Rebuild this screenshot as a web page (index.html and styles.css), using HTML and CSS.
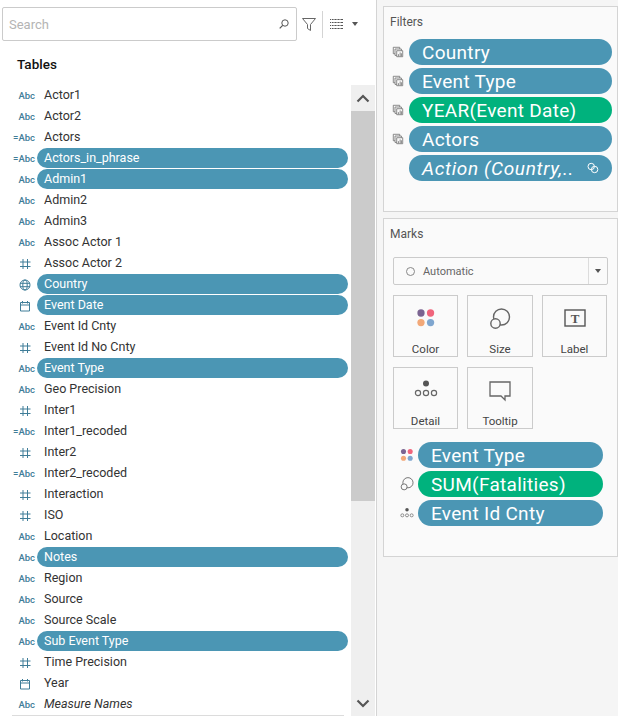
FILE: index.html
```html
<!DOCTYPE html>
<html lang="en">
<head>
    <meta charset="UTF-8">
    <meta name="viewport" content="width=device-width, initial-scale=1.0">
    <title>Data pane</title>
    <link rel="stylesheet" href="styles.css">
</head>
<body>
    <svg class="defs" width="0" height="0">
        <symbol id="i-num" viewBox="0 0 14 14"><path d="M5 2 L5 12 M9.5 2 L9.5 12 M2 5 L12.5 5 M2 9.5 L12.5 9.5" fill="none" stroke="#3f7d98" stroke-width="1"/></symbol>
        <symbol id="i-cal" viewBox="0 0 14 14"><path d="M2.5 3.5 H11.5 V12 H2.5 Z M2.5 6 H11.5 M4.5 2 V4.5 M9.5 2 V4.5" fill="none" stroke="#3f7d98" stroke-width="1"/></symbol>
        <symbol id="i-geo" viewBox="0 0 14 14"><g fill="none" stroke="#3f7d98" stroke-width="1"><circle cx="7" cy="7" r="5"/><ellipse cx="7" cy="7" rx="2.2" ry="5"/><path d="M2 5.3 H12 M2 8.7 H12"/></g></symbol>
        <symbol id="i-filter" viewBox="0 0 14 14"><g fill="#fafafa" stroke="#777" stroke-width="1"><path d="M1.5 1.5 H9 V9 H1.5 Z"/><path d="M3.5 3.5 H11 V11 H3.5 Z"/><path d="M5.5 5.5 H12.5 V12.5 H5.5 Z"/></g><path d="M7.5 12 V9.5 M9.5 12 V7.5 M11 12 V8.5" stroke="#777" stroke-width="1"/></symbol>
        <symbol id="i-colors" viewBox="0 0 22 22"><circle cx="5.5" cy="5.5" r="4" fill="#7b6491"/><circle cx="16" cy="5.5" r="4" fill="#f0657c"/><circle cx="5.5" cy="16" r="4" fill="#f2a878"/><circle cx="16" cy="16" r="4" fill="#7fa6cf"/></symbol>
        <symbol id="i-size" viewBox="0 0 22 22"><g fill="none" stroke="#666" stroke-width="1.4"><circle cx="12.5" cy="9" r="8"/><circle cx="6.5" cy="15.5" r="4.7" fill="#fafafa"/></g></symbol>
        <symbol id="i-detail" viewBox="0 0 24 18"><circle cx="12" cy="3.5" r="3" fill="#555"/><g fill="none" stroke="#666" stroke-width="1.2"><circle cx="4" cy="13" r="2.6"/><circle cx="12" cy="13" r="2.6"/><circle cx="20" cy="13" r="2.6"/></g></symbol>
    </svg>

    <div class="data-pane">
        <div class="search-row">
            <div class="search-box">
                <span class="search-text">Search</span>
                <svg class="search-icon" width="10" height="10" viewBox="0 0 10 10"><circle cx="6" cy="4" r="3.2" fill="none" stroke="#555" stroke-width="1"/><path d="M3.7 6.3 L.7 9.3" stroke="#555" stroke-width="1.2"/></svg>
            </div>
            <svg class="funnel" width="14" height="13" viewBox="0 0 14 13"><path d="M.5 .5 H13.5 L8.5 6.5 V12.5 L5.5 10.5 V6.5 Z" fill="none" stroke="#666" stroke-width="1"/></svg>
            <span class="tool-sep"></span>
            <svg class="list-icon" width="13" height="10" viewBox="0 0 13 10"><path d="M0 .5 H13 M0 3.5 H13 M0 6.5 H13 M0 9.5 H13" stroke="#555" stroke-width="1"/><path d="M1.5 0 V10 M4 0 V10 M7 0 V10 M10 0 V10" stroke="#fff" stroke-width=".8"/></svg>
            <span class="caret"></span>
        </div>
        <div class="tables-title">Tables</div>
        <div class="list-wrap">
            <ul class="field-list">
                <li class="field"><span class="type">Abc</span><span class="name">Actor1</span></li>
                <li class="field"><span class="type">Abc</span><span class="name">Actor2</span></li>
                <li class="field"><span class="type">=Abc</span><span class="name">Actors</span></li>
                <li class="field used"><span class="type">=Abc</span><span class="name">Actors_in_phrase</span></li>
                <li class="field used"><span class="type">Abc</span><span class="name">Admin1</span></li>
                <li class="field"><span class="type">Abc</span><span class="name">Admin2</span></li>
                <li class="field"><span class="type">Abc</span><span class="name">Admin3</span></li>
                <li class="field"><span class="type">Abc</span><span class="name">Assoc Actor 1</span></li>
                <li class="field"><span class="type"><svg class="type-icon"><use href="#i-num"/></svg></span><span class="name">Assoc Actor 2</span></li>
                <li class="field used"><span class="type"><svg class="type-icon"><use href="#i-geo"/></svg></span><span class="name">Country</span></li>
                <li class="field used"><span class="type"><svg class="type-icon"><use href="#i-cal"/></svg></span><span class="name">Event Date</span></li>
                <li class="field"><span class="type">Abc</span><span class="name">Event Id Cnty</span></li>
                <li class="field"><span class="type"><svg class="type-icon"><use href="#i-num"/></svg></span><span class="name">Event Id No Cnty</span></li>
                <li class="field used"><span class="type">Abc</span><span class="name">Event Type</span></li>
                <li class="field"><span class="type">Abc</span><span class="name">Geo Precision</span></li>
                <li class="field"><span class="type"><svg class="type-icon"><use href="#i-num"/></svg></span><span class="name">Inter1</span></li>
                <li class="field"><span class="type">=Abc</span><span class="name">Inter1_recoded</span></li>
                <li class="field"><span class="type"><svg class="type-icon"><use href="#i-num"/></svg></span><span class="name">Inter2</span></li>
                <li class="field"><span class="type">=Abc</span><span class="name">Inter2_recoded</span></li>
                <li class="field"><span class="type"><svg class="type-icon"><use href="#i-num"/></svg></span><span class="name">Interaction</span></li>
                <li class="field"><span class="type"><svg class="type-icon"><use href="#i-num"/></svg></span><span class="name">ISO</span></li>
                <li class="field"><span class="type">Abc</span><span class="name">Location</span></li>
                <li class="field used"><span class="type">Abc</span><span class="name">Notes</span></li>
                <li class="field"><span class="type">Abc</span><span class="name">Region</span></li>
                <li class="field"><span class="type">Abc</span><span class="name">Source</span></li>
                <li class="field"><span class="type">Abc</span><span class="name">Source Scale</span></li>
                <li class="field used"><span class="type">Abc</span><span class="name">Sub Event Type</span></li>
                <li class="field"><span class="type"><svg class="type-icon"><use href="#i-num"/></svg></span><span class="name">Time Precision</span></li>
                <li class="field"><span class="type"><svg class="type-icon"><use href="#i-cal"/></svg></span><span class="name">Year</span></li>
                <li class="field last"><span class="type">Abc</span><span class="name italic">Measure Names</span></li>
            </ul>
            <div class="scrollbar">
                <div class="scroll-btn"><svg width="14" height="9" viewBox="0 0 14 9"><path d="M1.5 7.5 L7 2 L12.5 7.5" fill="none" stroke="#555" stroke-width="2.2"/></svg></div>
                <div class="scroll-thumb"></div>
                <div class="scroll-track"></div>
                <div class="scroll-btn end"><svg width="14" height="9" viewBox="0 0 14 9"><path d="M1.5 1.5 L7 7 L12.5 1.5" fill="none" stroke="#555" stroke-width="2.2"/></svg></div>
            </div>
        </div>
    </div>

    <div class="side">
        <section class="card filters">
            <h3 class="card-title">Filters</h3>
            <div class="pill-list">
                <div class="shelf-row"><svg class="shelf-icon"><use href="#i-filter"/></svg><div class="pill">Country</div></div>
                <div class="shelf-row"><svg class="shelf-icon"><use href="#i-filter"/></svg><div class="pill">Event Type</div></div>
                <div class="shelf-row"><svg class="shelf-icon"><use href="#i-filter"/></svg><div class="pill green">YEAR(Event Date)</div></div>
                <div class="shelf-row"><svg class="shelf-icon"><use href="#i-filter"/></svg><div class="pill">Actors</div></div>
                <div class="shelf-row">
                    <span class="shelf-icon"></span>
                    <div class="pill italic">Action (Country,..
                        <svg class="link-icon" width="12" height="12" viewBox="0 0 12 12"><g fill="none" stroke="#fff" stroke-width="1"><circle cx="4.2" cy="4.5" r="3.2"/><circle cx="7.6" cy="7.5" r="3.2"/></g></svg>
                    </div>
                </div>
            </div>
        </section>

        <section class="card marks">
            <h3 class="card-title">Marks</h3>
            <div class="mark-select">
                <span class="mark-circle"></span>
                <span class="mark-type">Automatic</span>
                <span class="select-arrow"><span class="caret"></span></span>
            </div>
            <div class="mark-grid">
                <div class="mark-btn"><svg width="20" height="20"><use href="#i-colors"/></svg><span>Color</span></div>
                <div class="mark-btn"><svg width="22" height="22"><use href="#i-size"/></svg><span>Size</span></div>
                <div class="mark-btn">
                    <svg width="22" height="20" viewBox="0 0 22 20"><rect x="1" y="2" width="20" height="16" fill="none" stroke="#555" stroke-width="1.4"/><text class="t-glyph" x="11" y="15" text-anchor="middle">T</text></svg>
                    <span>Label</span>
                </div>
                <div class="mark-btn"><svg width="24" height="18"><use href="#i-detail"/></svg><span>Detail</span></div>
                <div class="mark-btn">
                    <svg width="22" height="22" viewBox="0 0 22 22"><path d="M1 2 H21 V16 H16 V20 L12 16 H1 Z" fill="none" stroke="#666" stroke-width="1.3"/></svg>
                    <span>Tooltip</span>
                </div>
            </div>
            <div class="pill-list mark-pills">
                <div class="shelf-row"><svg class="shelf-icon small"><use href="#i-colors"/></svg><div class="pill">Event Type</div></div>
                <div class="shelf-row"><svg class="shelf-icon small"><use href="#i-size"/></svg><div class="pill green">SUM(Fatalities)</div></div>
                <div class="shelf-row"><svg class="shelf-icon small"><use href="#i-detail"/></svg><div class="pill">Event Id Cnty</div></div>
            </div>
        </section>
    </div>
</body>
</html>
```

FILE: styles.css
```css
html, body {
    height: 100%;
}

body {
    font-family: "Roboto", "Liberation Sans", sans-serif;
    background-color: #f5f5f5;
    margin: 0;
    padding: 0;
    display: flex;
    height: 716px;
    overflow: hidden;
    color: #333;
}

.defs {
    position: absolute;
}

/* left pane */
.data-pane {
    width: 376px;
    height: 716px;
    background-color: #fff;
    border-right: 1px solid #d4d4d4;
    display: flex;
    flex-direction: column;
    flex-shrink: 0;
}

.search-row {
    display: flex;
    align-items: center;
    padding: 7px 0 0 2px;
}

.search-box {
    width: 295px;
    height: 34px;
    box-sizing: border-box;
    border: 1px solid #cbcbcb;
    border-radius: 2px;
    display: flex;
    align-items: center;
    justify-content: space-between;
    padding: 0 7px 0 6px;
}

.search-text {
    font-size: 13px;
    color: #b4b4b4;
}

.funnel {
    margin-left: 5px;
}

.tool-sep {
    width: 1px;
    height: 27px;
    background-color: #d4d4d4;
    margin: 0 7px 0 6px;
}

.caret {
    display: inline-block;
    width: 0;
    height: 0;
    border-left: 3.5px solid transparent;
    border-right: 3.5px solid transparent;
    border-top: 4px solid #555;
}

.search-row .caret {
    margin-left: 9px;
}

.tables-title {
    font-size: 13.5px;
    font-weight: 500;
    color: #111;
    padding: 15px 0 0 17px;
    line-height: 16px;
    height: 29px;
}

.list-wrap {
    flex: 1;
    display: flex;
    min-height: 0;
}

.field-list {
    list-style: none;
    margin: 0;
    padding: 0 0 0 12px;
    width: 336px;
    flex-shrink: 0;
}

.field {
    display: flex;
    align-items: center;
    height: 21px;
    font-size: 12.5px;
}

.type {
    width: 23px;
    flex-shrink: 0;
    text-align: right;
    font-size: 9.5px;
    font-weight: 500;
    color: #3f7d98;
    display: flex;
    justify-content: flex-end;
    white-space: nowrap;
}

.type-icon {
    width: 14px;
    height: 14px;
    margin-right: 3px;
}

.name {
    flex: 1;
    height: 20px;
    line-height: 20px;
    margin-left: 2px;
    padding-left: 7px;
    border-radius: 10px;
    color: #333;
    margin-bottom: 1px;
}

.used .name {
    background-color: #4b96b4;
    color: #fff;
}

.italic {
    font-style: italic;
}

.last {
    border-bottom: 1px solid #dcdcdc;
    margin-right: 4px;
}

.scrollbar {
    width: 24px;
    margin-left: 3px;
    background-color: #efefef;
    display: flex;
    flex-direction: column;
}

.scroll-btn {
    height: 26px;
    display: flex;
    align-items: center;
    justify-content: center;
    flex-shrink: 0;
}

.scroll-thumb {
    height: 390px;
    background-color: #cbcbcb;
}

.scroll-track {
    flex: 1;
}

/* right side */
.side {
    flex: 1;
    padding: 6px 0 0 6px;
    display: flex;
    flex-direction: column;
    gap: 6px;
}

.card {
    width: 235px;
    box-sizing: border-box;
    background-color: #fafafa;
    border: 1px solid #d4d4d4;
}

.filters {
    height: 206px;
}

.marks {
    height: 339px;
}

.card-title {
    margin: 0;
    font-size: 12px;
    font-weight: 400;
    color: #555;
    line-height: 14px;
    padding: 8px 0 0 6px;
}

.pill-list {
    display: flex;
    flex-direction: column;
    gap: 3px;
    margin-top: 10px;
}

.shelf-row {
    display: flex;
    align-items: center;
}

.shelf-icon {
    width: 12px;
    height: 12px;
    margin-left: 8px;
    margin-right: 5px;
    flex-shrink: 0;
}

.pill {
    width: 203px;
    height: 26px;
    box-sizing: border-box;
    line-height: 26px;
    padding-top: 1px;
    border-radius: 13px;
    background-color: #4b96b4;
    color: #fff;
    font-size: 19px;
    letter-spacing: .3px;
    padding-left: 13px;
    position: relative;
    white-space: nowrap;
}

.pill.green {
    background-color: #00b27d;
}

.pill.italic {
    letter-spacing: .65px;
}

.link-icon {
    position: absolute;
    right: 13px;
    top: 7px;
}

.mark-select {
    margin: 16px 9px 0;
    height: 28px;
    box-sizing: border-box;
    border: 1px solid #cbcbcb;
    border-radius: 2px;
    background-color: #fafafa;
    display: flex;
    align-items: center;
    font-size: 11px;
    color: #666;
    padding-left: 12px;
}

.mark-circle {
    width: 7px;
    height: 7px;
    border: 1px solid #888;
    border-radius: 50%;
}

.mark-type {
    flex: 1;
    margin-left: 8px;
    padding-top: 1px;
}

.select-arrow {
    width: 18px;
    height: 100%;
    border-left: 1px solid #dcdcdc;
    display: flex;
    align-items: center;
    justify-content: center;
}

.mark-grid {
    display: grid;
    grid-template-columns: 65px 66px 65px;
    grid-auto-rows: 62px;
    column-gap: 9px;
    row-gap: 10px;
    margin: 10px 9px 0;
}

.mark-btn {
    box-sizing: border-box;
    border: 1px solid #cbcbcb;
    display: flex;
    flex-direction: column;
    align-items: center;
    justify-content: space-between;
    padding: 12px 0 0;
    font-size: 11.5px;
    color: #444;
}

.t-glyph {
    font-family: "Liberation Serif", serif;
    font-size: 13px;
    font-weight: 700;
    fill: #555;
}

.mark-pills {
    margin-top: 13px;
}

.mark-pills .pill {
    width: 185px;
}

.shelf-icon.small {
    width: 14px;
    height: 14px;
    margin-left: 16px;
    margin-right: 4px;
}
```
